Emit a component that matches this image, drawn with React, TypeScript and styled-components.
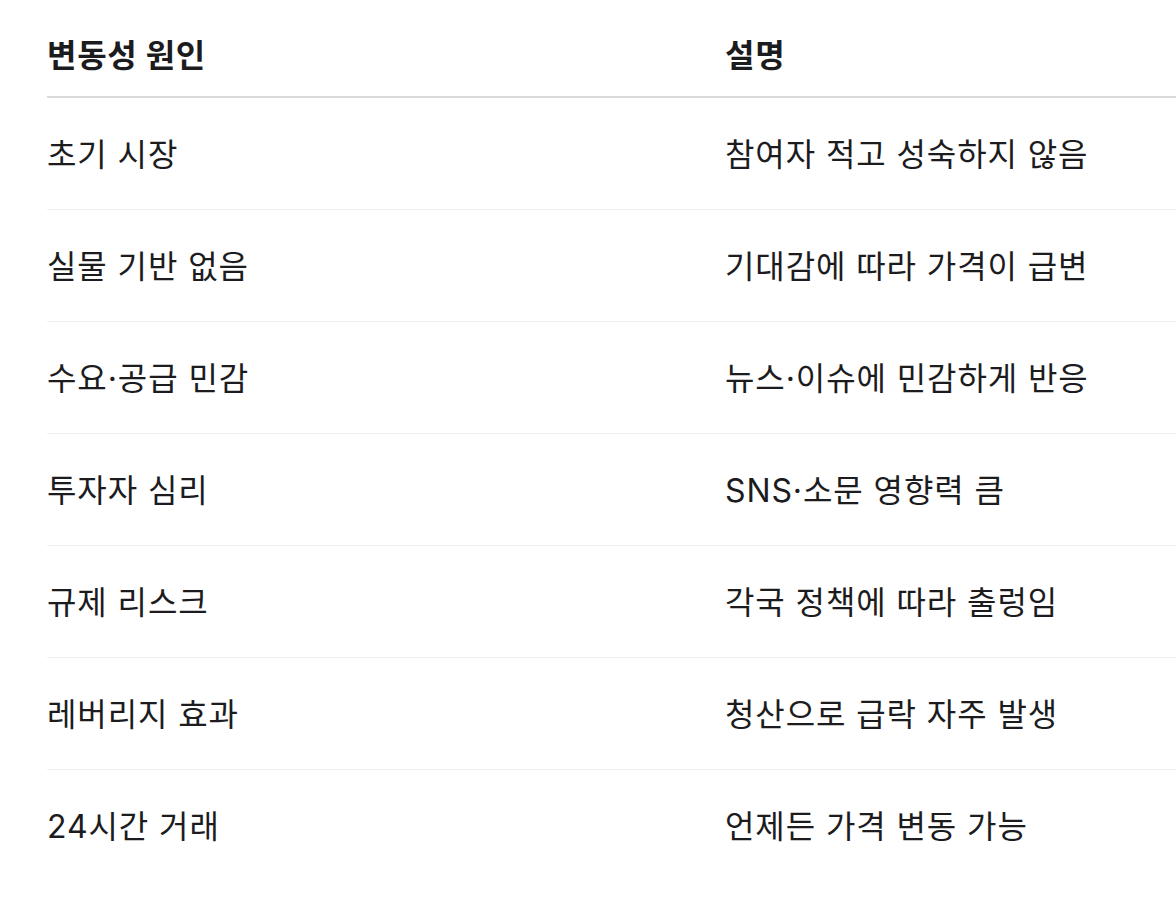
import React from 'react';
import styled, { createGlobalStyle } from 'styled-components';

const GlobalStyle = createGlobalStyle`
	html, body {
		margin: 0;
		padding: 0;
		background: #fff;
		overflow: hidden;
	}
	body {
		font-family: Inter, 'Noto Sans CJK KR', sans-serif;
		color: #1c1c1e;
	}
`;

const Page = styled.div`
	width: 1176px;
	height: 920px;
	padding: 12px 0 0 47px;
	box-sizing: border-box;
	overflow: hidden;
`;

const Table = styled.div`
	display: grid;
	grid-template-columns: 678px 600px;
	width: 1278px;
`;

const HeadCell = styled.div`
	display: flex;
	align-items: center;
	box-sizing: border-box;
	height: 86px;
	padding-bottom: 2px;
	font-size: 32px;
	font-weight: 700;
	letter-spacing: 0.7px;
	border-bottom: 2px solid #d9d9d9;
`;

const Cell = styled.div<{ $last?: boolean }>`
	display: flex;
	align-items: center;
	box-sizing: border-box;
	height: 112px;
	padding-bottom: 3px;
	font-size: 32px;
	font-weight: 400;
	letter-spacing: 0.9px;
	border-bottom: 1px solid ${({ $last }) => ($last ? 'transparent' : '#f0f0f0')};
`;

const rows: [string, string][] = [
	['초기 시장', '참여자 적고 성숙하지 않음'],
	['실물 기반 없음', '기대감에 따라 가격이 급변'],
	['수요·공급 민감', '뉴스·이슈에 민감하게 반응'],
	['투자자 심리', 'SNS·소문 영향력 큼'],
	['규제 리스크', '각국 정책에 따라 출렁임'],
	['레버리지 효과', '청산으로 급락 자주 발생'],
	['24시간 거래', '언제든 가격 변동 가능'],
];

function App(): JSX.Element {
	return (
		<Page>
			<GlobalStyle />
			<Table>
				<HeadCell>변동성 원인</HeadCell>
				<HeadCell>설명</HeadCell>
				{rows.map(([cause, desc], i) => (
					<React.Fragment key={cause}>
						<Cell $last={i === rows.length - 1}>{cause}</Cell>
						<Cell $last={i === rows.length - 1}>{desc}</Cell>
					</React.Fragment>
				))}
			</Table>
		</Page>
	);
}

export default App;
